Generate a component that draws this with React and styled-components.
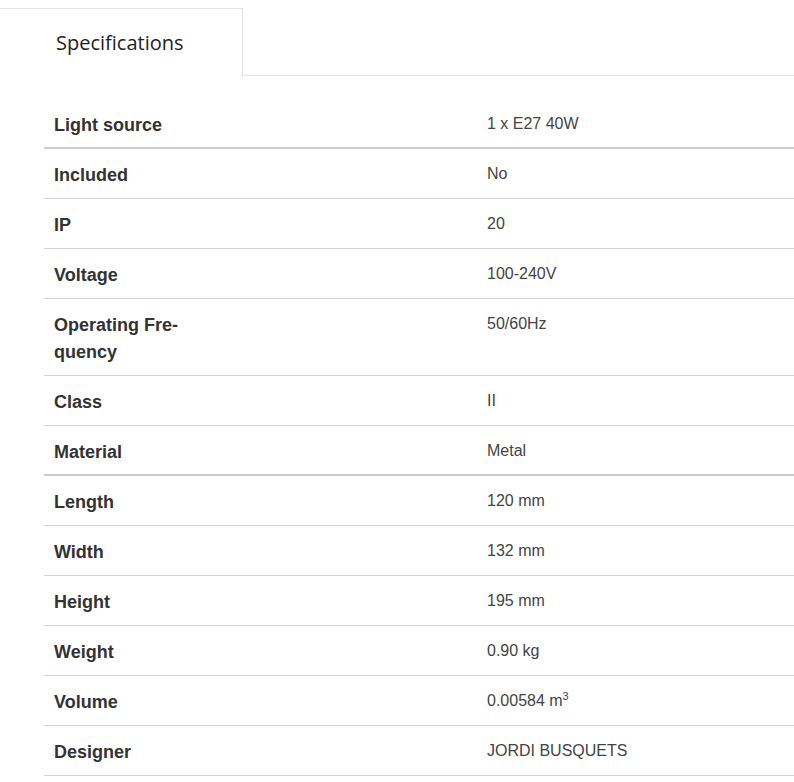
import styled, { createGlobalStyle } from "styled-components";

const GlobalStyle = createGlobalStyle`
  body {
    margin: 0;
    background: #fff;
  }
`;

const specs = [
  { label: "Light source", value: "1 x E27 40W", strong: true },
  { label: "Included", value: "No" },
  { label: "IP", value: "20" },
  { label: "Voltage", value: "100-240V" },
  { label: "Operating Fre\u00ADquency", value: "50/60Hz" },
  { label: "Class", value: "II" },
  { label: "Material", value: "Metal", strong: true },
  { label: "Length", value: "120 mm" },
  { label: "Width", value: "132 mm" },
  { label: "Height", value: "195 mm" },
  { label: "Weight", value: "0.90 kg" },
  { label: "Volume", value: <>0.00584 m<sup>3</sup></> },
  { label: "Designer", value: "JORDI BUSQUETS" },
];

const App = () => {
  return (
    <Page>
      <GlobalStyle />
      <Tabs>
        <Tab>Specifications</Tab>
        <TabFill />
      </Tabs>

      <Content>
        <SpecTable>
          <tbody>
            {specs.map((s, i) => (
              <Row key={i} $strong={s.strong}>
                <Label $strong={s.strong}>
                  <LabelText>{s.label}</LabelText>
                </Label>
                <Value $strong={s.strong}>{s.value}</Value>
              </Row>
            ))}
          </tbody>
        </SpecTable>
      </Content>
    </Page>
  );
};

export default App;

const Page = styled.div`
  padding-top: 8px;
  width: 794px;
`;

const Tabs = styled.div`
  display: flex;
  height: 68px;
`;

const Tab = styled.div`
  width: 186px;
  padding-left: 56px;
  border-top: 1px solid #e2e2e2;
  border-right: 1px solid #e2e2e2;
  display: flex;
  align-items: center;
  font-family: "Open Sans", sans-serif;
  font-size: 20px;
  color: #222;
`;

const TabFill = styled.div`
  flex: 1;
  border-bottom: 1px solid #e2e2e2;
`;

const Content = styled.div`
  padding: 23px 0 0 44px;
`;

const SpecTable = styled.table`
  width: 100%;
  border-collapse: collapse;
  font-family: "Liberation Sans", Arial, sans-serif;
`;

const Row = styled.tr`
  border-bottom: ${(p) => (p.$strong ? "2px solid #cbcbcb" : "1px solid #d4d4d4")};
`;

const Label = styled.th`
  width: 423px;
  padding: 13px 0 ${(p) => (p.$strong ? "8px" : "9px")} 10px;
  text-align: left;
  vertical-align: top;
  font-size: 18px;
  line-height: 27px;
  font-weight: bold;
  color: #333;
`;

const LabelText = styled.div`
  max-width: 150px;
  hyphens: manual;
`;

const Value = styled.td`
  padding: 13px 0 ${(p) => (p.$strong ? "8px" : "9px")} 10px;
  vertical-align: top;
  font-size: 16px;
  line-height: 24px;
  color: #444;

  sup {
    font-size: 11px;
    line-height: 0;
    vertical-align: 6px;
  }
`;
